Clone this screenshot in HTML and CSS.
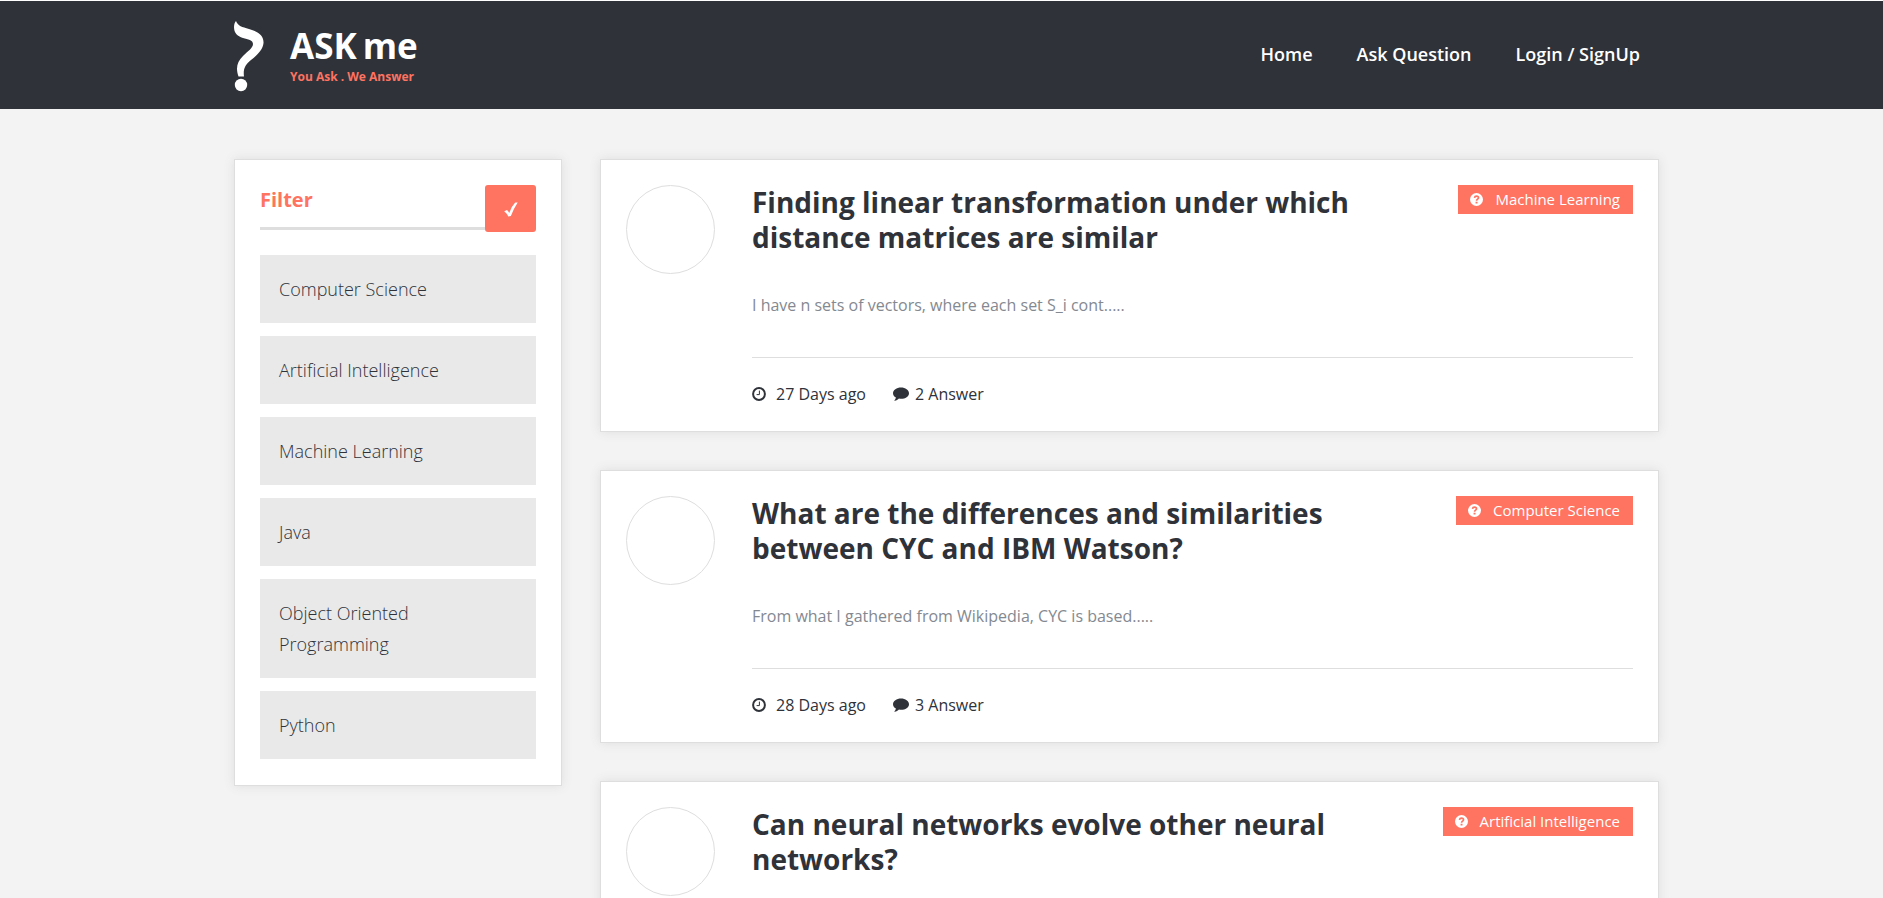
FILE: index.html
```html
<!DOCTYPE html>
<html lang="en">
<head>
<meta charset="utf-8">
<title>ASK me</title>
<link rel="stylesheet" href="styles.css">
</head>
<body>
<svg class="sprite" aria-hidden="true">
  <symbol id="clock" viewBox="0 0 14 14"><circle cx="7" cy="7" r="5.9" fill="none" stroke="currentColor" stroke-width="2"/><path d="M7.4 3.6v4H4.6" fill="none" stroke="currentColor" stroke-width="1"/></symbol>
  <symbol id="comment" viewBox="0 0 16 14"><path d="M8 .5c4.400 0 8 2.500 8 5.700s-3.600 5.600-8 5.600c-.7 0-1.400-.1-2-.2-1.200 1.200-2.600 1.900-4.300 2.200-.4 0-.5-.3-.2-.6.8-.7 1.200-1.500 1.400-2.600C1.100 9.600 0 8 0 6.200 0 3 3.600.5 8 .5z" fill="currentColor"/></symbol>
  <symbol id="question" viewBox="0 0 14 14"><circle cx="7" cy="7" r="7" fill="#fff"/><path d="M4.800 5.200C5 3.900 5.800 3.300 7 3.300c1.300 0 2.200.7 2.200 1.800 0 1.600-2.100 1.500-2.100 3.200" fill="none" stroke="#ff7361" stroke-width="1.800"/><rect x="6" y="9.400" width="2.100" height="1.900" fill="#ff7361"/></symbol>
</svg>

<header class="header">
  <div class="wrap header-row">
    <a class="logo" href="#">
      <svg class="logo-mark" viewBox="0 0 30 71" aria-hidden="true"><path d="M2 0C4 5 8 6 15 8C24 10.500 30 14.500 29.500 22C29 29 23 34 17 39C11 44 9 48 10 55.500H4.500C1.500 47 3 41 9 35C14 30 19 27 19 23C19 19 14 18.500 9 17C3 15 0 12 0 6C0 3 1 1 2 0Z" fill="#fff"/><circle cx="7" cy="64" r="6.200" fill="#fff"/></svg>
      <span class="logo-text">
        <span class="logo-name"><span>ASK</span><span>me</span></span>
        <span class="logo-tag">You Ask . We Answer</span>
      </span>
    </a>
    <nav class="nav">
      <a href="#">Home</a>
      <a href="#">Ask Question</a>
      <a href="#">Login / SignUp</a>
    </nav>
  </div>
</header>

<div class="wrap layout">
  <aside class="card filter">
    <div class="filter-head">
      <h2 class="filter-title">Filter</h2>
      <button class="apply" type="button" aria-label="Apply filter"><svg viewBox="0 0 14 15" width="14" height="15" aria-hidden="true"><path d="M.2 9.300L3 8.100Q4.300 9.300 5.200 11Q7.600 4.300 11.200.6L13.700.4Q9.700 6.300 6.900 14L4.300 14.400Q2.700 11.300.2 9.300Z" fill="#fff"/></svg></button>
    </div>
    <div class="filter-list">
      <button type="button">Computer Science</button>
      <button type="button">Artificial Intelligence</button>
      <button type="button">Machine Learning</button>
      <button type="button">Java</button>
      <button type="button">Object Oriented Programming</button>
      <button type="button">Python</button>
    </div>
  </aside>

  <main class="questions">
    <article class="card question">
      <div class="avatar"></div>
      <div class="content">
        <div class="question-head">
          <h2 class="title">Finding linear transformation under which distance matrices are similar</h2>
          <a class="badge" href="#"><svg aria-hidden="true"><use href="#question"/></svg>Machine Learning</a>
        </div>
        <p class="excerpt">I have n sets of vectors, where each set S_i cont.....</p>
        <div class="meta">
          <span class="date"><svg aria-hidden="true"><use href="#clock"/></svg>27 Days ago</span>
          <span class="answers"><svg aria-hidden="true"><use href="#comment"/></svg>2 Answer</span>
        </div>
      </div>
    </article>

    <article class="card question">
      <div class="avatar"></div>
      <div class="content">
        <div class="question-head">
          <h2 class="title">What are the differences and similarities between CYC and IBM Watson?</h2>
          <a class="badge" href="#"><svg aria-hidden="true"><use href="#question"/></svg>Computer Science</a>
        </div>
        <p class="excerpt">From what I gathered from Wikipedia, CYC is based.....</p>
        <div class="meta">
          <span class="date"><svg aria-hidden="true"><use href="#clock"/></svg>28 Days ago</span>
          <span class="answers"><svg aria-hidden="true"><use href="#comment"/></svg>3 Answer</span>
        </div>
      </div>
    </article>

    <article class="card question">
      <div class="avatar"></div>
      <div class="content">
        <div class="question-head">
          <h2 class="title">Can neural networks evolve other neural networks?</h2>
          <a class="badge" href="#"><svg aria-hidden="true"><use href="#question"/></svg>Artificial Intelligence</a>
        </div>
      </div>
    </article>
  </main>
</div>
</body>
</html>
```

FILE: styles.css
```css
* { box-sizing: border-box; }

body {
  margin: 0;
  height: 100vh;
  overflow: hidden;
  background: #f3f3f3;
  color: #2f3239;
  font-family: "Open Sans", "Noto Sans", sans-serif;
  font-size: 16px;
  line-height: 28px;
}

h2, p { margin: 0; }
a { color: inherit; text-decoration: none; }
button { border: 0; font: inherit; color: inherit; cursor: pointer; }
.sprite { display: none; }

.wrap {
  max-width: 1435px;
  margin: 0 auto;
  padding-left: 10px;
}

.header {
  border-top: 1px solid #fff;
  background: #2f3239;
}

.header-row {
  display: flex;
  justify-content: space-between;
  align-items: center;
  height: 108px;
}

.logo { display: flex; gap: 26px; padding-top: 2px; color: #fff; }
.logo-mark { width: 30px; height: 71px; }
.logo-text { display: flex; flex-direction: column; padding-top: 4px; }
.logo-name { display: flex; gap: 6px; font-size: 35px; font-weight: 700; line-height: 42px; }
.logo-tag { color: #ff7361; font-size: 12px; font-weight: 700; line-height: 20px; }

.nav {
  display: flex;
  gap: 44px;
  padding: 0 19px 2px 0;
  color: #fff;
  font-size: 18px;
  font-weight: 600;
}

.layout {
  display: grid;
  grid-template-columns: 328px 1fr;
  gap: 38px;
  align-items: start;
  padding-top: 50px;
}

.card {
  border: 1px solid #dedede;
  background: #fff;
  box-shadow: 0 0 10px #dedede;
  padding: 25px;
}

.filter-head {
  display: flex;
  justify-content: space-between;
  align-items: flex-start;
}

.filter-title {
  flex: 1;
  height: 45px;
  border-bottom: 3px solid #dedede;
  color: #ff7361;
  font-size: 20px;
  font-weight: 700;
  line-height: 30px;
}

.apply {
  display: flex;
  align-items: center;
  justify-content: center;
  width: 51px;
  height: 47px;
  padding: 2px 0 0;
  border-radius: 3px;
  background: #ff7361;
}

.filter-list {
  display: flex;
  flex-direction: column;
  gap: 13px;
  padding: 23px 0 1px;
}

.filter-list button {
  padding: 19px 19px 18px;
  background: #e9e9e9;
  font-size: 18px;
  font-weight: 300;
  line-height: 31px;
  text-align: left;
}

.questions { display: grid; gap: 38px; }
.question { display: flex; gap: 37px; padding-bottom: 23px; }

.avatar {
  flex: none;
  width: 89px;
  height: 89px;
  border: 1px solid #dedede;
  border-radius: 50%;
}

.content { flex: 1; }
.question-head {
  display: flex;
  justify-content: space-between;
  align-items: flex-start;
}

.title {
  max-width: 640px;
  font-size: 28px;
  font-weight: 700;
  line-height: 35px;
}

.badge {
  display: flex;
  align-items: center;
  gap: 12px;
  padding: 0 13px 0 12px;
  background: #ff7361;
  color: #fff;
  font-size: 15px;
  line-height: 29px;
}
.badge svg { width: 13px; height: 13px; }

.excerpt {
  padding: 36px 0 38px;
  border-bottom: 1px solid #dedede;
  color: #848991;
}

.meta {
  display: flex;
  gap: 27px;
  padding-top: 22px;
}
.meta span { display: flex; align-items: center; }
.date { gap: 10px; }
.answers { gap: 6px; }
.date svg { width: 14px; height: 14px; }
.answers svg { width: 16px; height: 14px; }
```
